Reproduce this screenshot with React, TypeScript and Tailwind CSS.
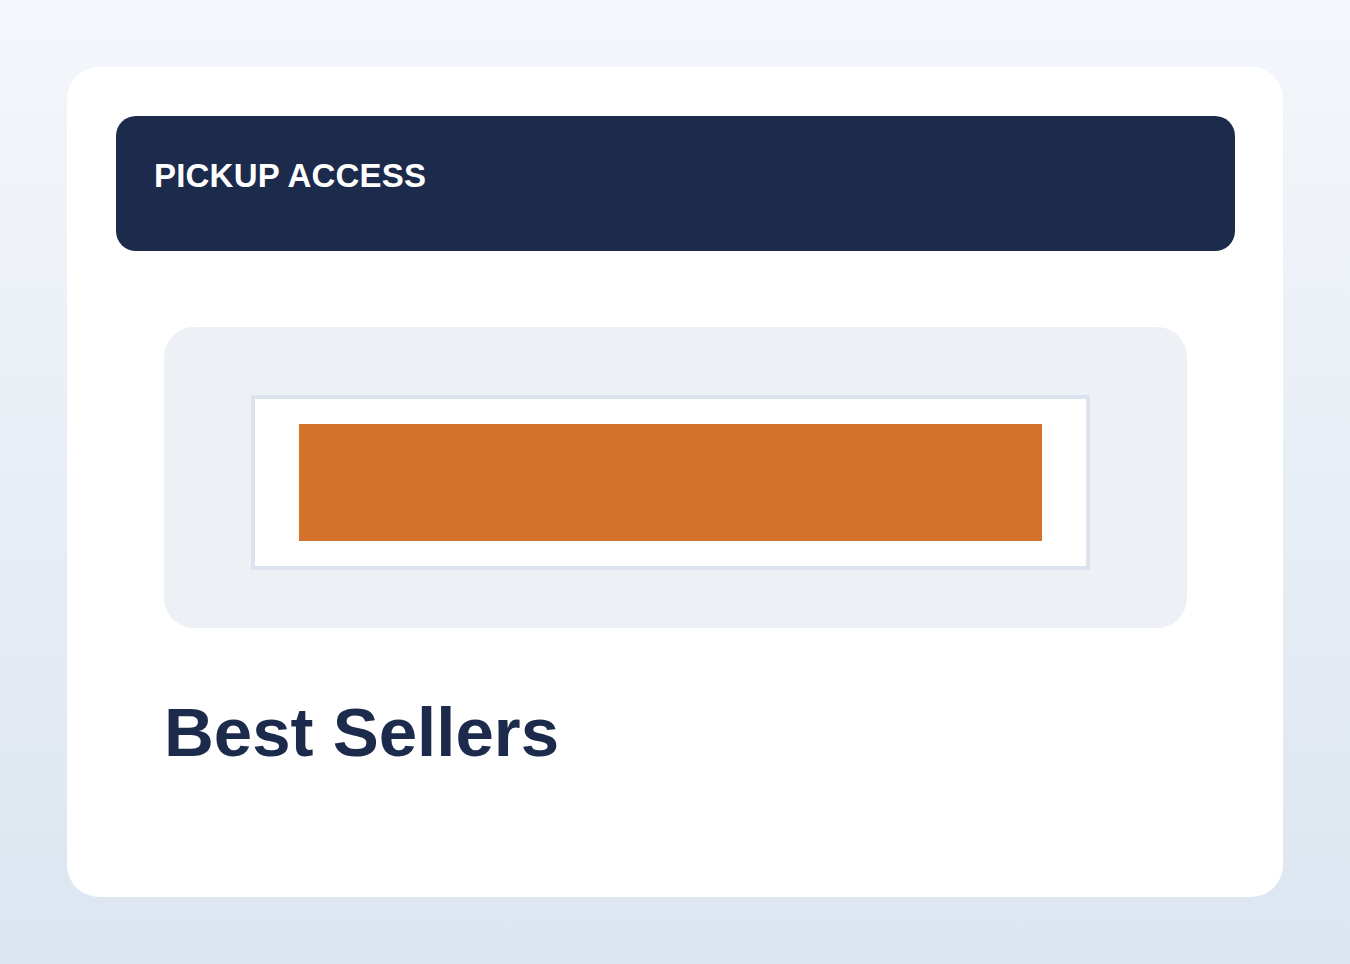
export default function App() {
  return (
    <div className="min-h-screen w-full bg-gradient-to-b from-[#f4f7fb] to-[#dce5f0] pt-[67px] font-['Liberation_Sans',Arial,sans-serif]">
      <div className="mx-auto h-[830px] w-[1216px] rounded-[32px] bg-white pl-[49px] pr-[48px] pt-[49px]">
        {/* header bar */}
        <div className="h-[135px] w-full rounded-[20px] bg-[#1c2a4b] pl-[38px] pt-[43px]">
          <h1 className="text-[33px] font-bold leading-none tracking-[0.2px] text-white">PICKUP ACCESS</h1>
        </div>

        {/* banner panel */}
        <div className="mx-[48px] mt-[76px] h-[301px] rounded-[30px] bg-[#edf1f6] pl-[87px] pt-[68px]">
          <div className="h-[175px] w-[839px] border-4 border-[#dbe3ee] bg-white pl-[44px] pt-[25px]">
            <div className="h-[117px] w-[743px] bg-[#d4722c]" />
          </div>
        </div>

        <h2 className="ml-[48px] mt-[70px] text-[69px] font-bold leading-none text-[#1c2a4b]">Best Sellers</h2>
      </div>
    </div>
  );
}
